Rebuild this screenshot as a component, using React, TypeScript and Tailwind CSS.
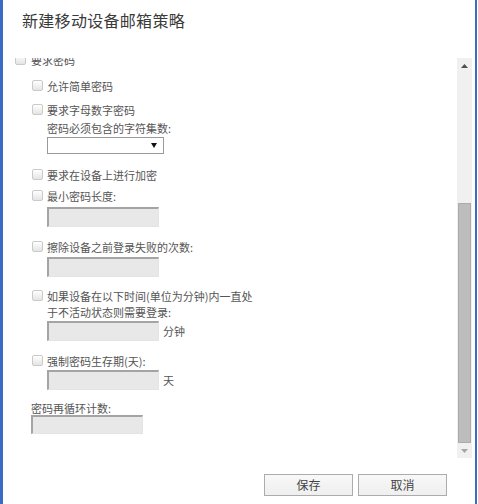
import React from "react";

function Cb() {
  return (
    <span className="inline-block w-[11px] h-[11px] shrink-0 rounded-[2px] border border-[#cacaca] bg-linear-to-b from-white to-[#e4e4e4] mb-[2px]" />
  );
}

function Field({ w = 112, h = 20 }: { w?: number; h?: number }) {
  return (
    <div
      className="bg-[#e8e8e8] border-t-2 border-l-2 border-r border-b border-t-[#a4a4a4] border-l-[#a4a4a4] border-r-[#e4e4e4] border-b-[#e4e4e4] shrink-0"
      style={{ width: w, height: h }}
    />
  );
}

export default function App() {
  return (
    <div className="w-[478px] h-[504px] bg-white flex font-['Noto_Sans_CJK_SC','Noto_Sans',sans-serif] text-[#555555] overflow-hidden">
      <div className="w-[3px] bg-[#3a6cc4] shrink-0" />
      <div className="w-[472px] flex flex-col">
        {/* title */}
        <div className="h-[58px] pl-[19px] pt-[10px] shrink-0">
          <div className="text-[16px] leading-[20px] tracking-[0.3px] text-[#3a3a3a]">
            新建移动设备邮箱策略
          </div>
        </div>

        {/* scroll area */}
        <div className="h-[401px] flex shrink-0">
          <div className="flex-1 overflow-hidden text-[11px]">
            <div className="mt-[-6px] pl-[12px] flex flex-col">
              <div className="flex items-center gap-[5px] h-[16px] leading-[16px]">
                <Cb />
                <span>要求密码</span>
              </div>

              <div className="pl-[17px] flex flex-col">
                <div className="mt-[10px] flex items-center gap-[4px] h-[16px] leading-[16px]">
                  <Cb />
                  <span>允许简单密码</span>
                </div>
                <div className="mt-[8px] flex items-center gap-[4px] h-[16px] leading-[16px]">
                  <Cb />
                  <span>要求字母数字密码</span>
                </div>
                <div className="pl-[15px] flex flex-col">
                  <div className="mt-[2px] h-[16px] leading-[16px]">密码必须包含的字符集数:</div>
                  <div className="mt-[1px] w-[117px] h-[17px] border border-[#9a9a9a] bg-white flex items-center justify-end pr-[6px]">
                    <svg width="6" height="5" viewBox="0 0 6 5">
                      <path d="M0 0 L6 0 L3 5 Z" fill="#111" />
                    </svg>
                  </div>
                </div>

                <div className="mt-[13px] flex items-center gap-[4px] h-[16px] leading-[16px]">
                  <Cb />
                  <span>要求在设备上进行加密</span>
                </div>

                <div className="mt-[5px] flex items-center gap-[4px] h-[16px] leading-[16px]">
                  <Cb />
                  <span>最小密码长度:</span>
                </div>
                <div className="pl-[15px] mt-[3px]">
                  <Field />
                </div>

                <div className="mt-[12px] flex items-center gap-[4px] h-[16px] leading-[16px]">
                  <Cb />
                  <span>擦除设备之前登录失败的次数:</span>
                </div>
                <div className="pl-[15px] mt-[2px]">
                  <Field />
                </div>

                <div className="mt-[11px] flex items-start gap-[4px] leading-[16px]">
                  <span className="mt-[2px]">
                    <Cb />
                  </span>
                  <span>
                    如果设备在以下时间(单位为分钟)内一直处
                    <br />
                    于不活动状态则需要登录:
                  </span>
                </div>
                <div className="pl-[15px] mt-[1px] flex items-center gap-[4px]">
                  <Field />
                  <span className="leading-[16px]">分钟</span>
                </div>

                <div className="mt-[12px] flex items-center gap-[4px] h-[16px] leading-[16px]">
                  <Cb />
                  <span>强制密码生存期(天):</span>
                </div>
                <div className="pl-[15px] mt-[1px] flex items-center gap-[4px]">
                  <Field />
                  <span className="leading-[16px]">天</span>
                </div>
              </div>

              <div className="ml-[16px] mt-[11px] h-[14px] leading-[14px]">密码再循环计数:</div>
              <div className="ml-[16px]">
                <Field h={19} />
              </div>
            </div>
          </div>

          {/* scrollbar */}
          <div className="w-[15px] h-[400px] bg-[#f0f0f0] flex flex-col items-center shrink-0">
            <div className="h-[15px] w-full flex items-center justify-center shrink-0">
              <svg width="7" height="4" viewBox="0 0 7 4">
                <path d="M0 4 L7 4 L3.5 0 Z" fill="#505050" />
              </svg>
            </div>
            <div className="h-[130px] shrink-0" />
            <div className="w-[13px] h-[240px] bg-[#bdbdbd] border border-[#ababab] shrink-0" />
            <div className="h-[15px] w-full flex items-center justify-center shrink-0">
              <svg width="7" height="4" viewBox="0 0 7 4">
                <path d="M0 0 L7 0 L3.5 4 Z" fill="#a6a6a6" />
              </svg>
            </div>
          </div>
          <div className="w-[3px] shrink-0" />
        </div>

        {/* buttons */}
        <div className="flex justify-end gap-[5px] pr-[28px] pt-[15px]">
          <button className="w-[89px] h-[22px] border border-[#acacac] bg-linear-to-b from-[#f8f8f8] to-[#efefef] text-[12px] leading-[20px] text-[#444]">
            保存
          </button>
          <button className="w-[89px] h-[22px] border border-[#acacac] bg-linear-to-b from-[#f8f8f8] to-[#efefef] text-[12px] leading-[20px] text-[#444]">
            取消
          </button>
        </div>
      </div>
      <div className="w-[2px] bg-[#3a6cc4] shrink-0" />
      <div className="w-[1px] bg-white shrink-0" />
    </div>
  );
}
